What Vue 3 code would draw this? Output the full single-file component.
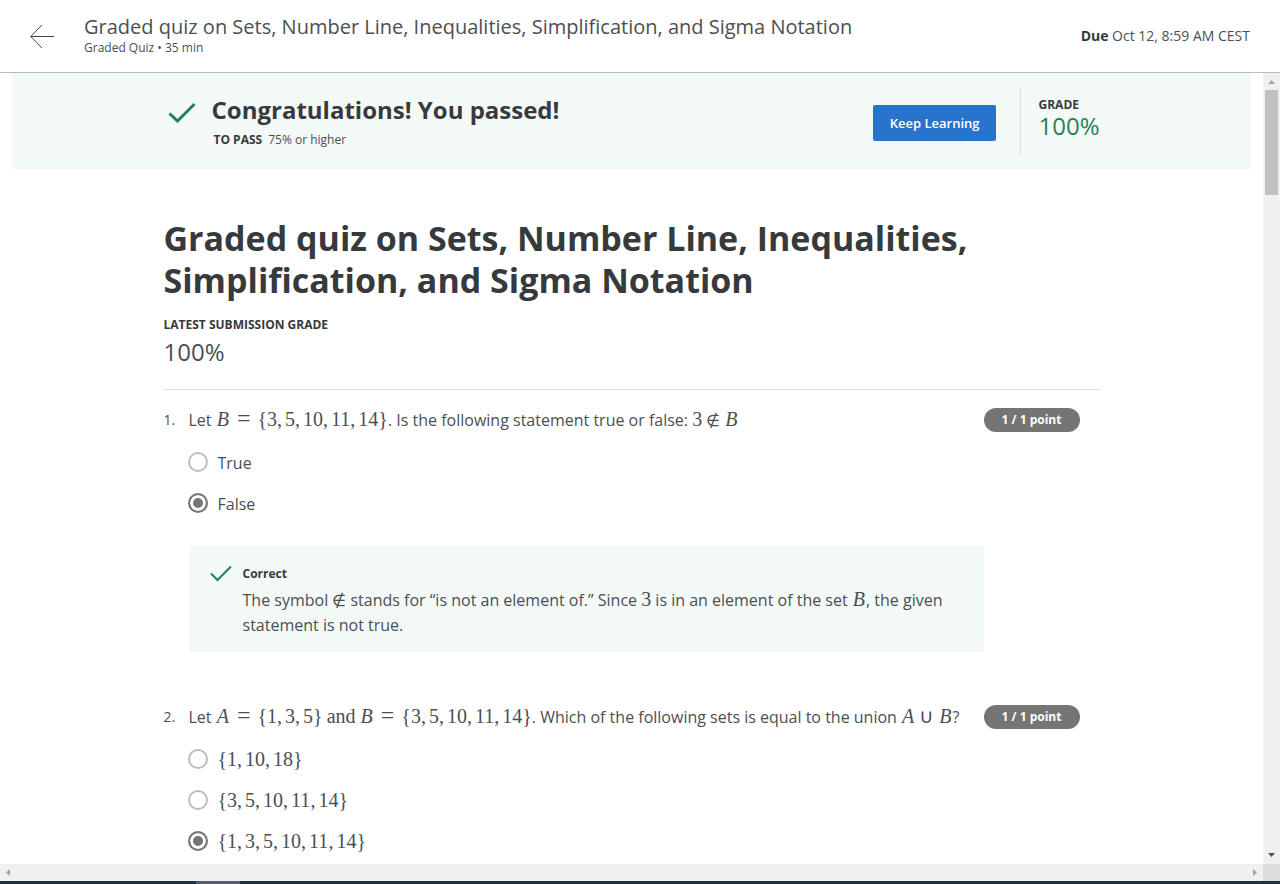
<script setup>
import { reactive } from 'vue'

const text = (value) => ({ kind: 'text', value })
const v = (value) => ({ kind: 'variable', value })
const n = (value) => ({ kind: 'digits', value })
const rel = (value) => ({ kind: 'relation', value })

// {a, b, c} as math tokens: each comma carries a thin space after it
const set = (...items) => [
  n('{' + items[0]),
  ...items.slice(1).flatMap((item) => [{ kind: 'comma', value: ',' }, n(String(item))]),
  n('}'),
]

const questions = reactive([
  {
    id: 1,
    prompt: [
      text('Let '), v('B'), rel('='), ...set(3, 5, 10, 11, 14),
      text('. Is the following statement true or false: '),
      n('3'), { kind: 'member spaced', value: '∉' }, v('B'),
    ],
    options: [[text('True')], [text('False')]],
    answer: 1,
    feedback: [
      text('The symbol '), { kind: 'member', value: '∉' },
      text(' stands for “is not an element of.” Since '), n('3'),
      text(' is in an element of the set '), v('B'),
      text(', the given '), text('statement is not true.'),
    ],
  },
  {
    id: 2,
    prompt: [
      text('Let '), v('A'), rel('='), ...set(1, 3, 5), { kind: 'word', value: 'and' },
      v('B'), rel('='), ...set(3, 5, 10, 11, 14),
      text('. Which of the following sets is equal to the union '),
      v('A'), { kind: 'union', value: '∪' }, v('B'), text('?'),
    ],
    options: [set(1, 10, 18), set(3, 5, 10, 11, 14), set(1, 3, 5, 10, 11, 14)],
    answer: 2,
    feedback: null,
  },
])
</script>

<template>
  <div class="page">
    <header class="topbar">
      <a href="#" class="back" aria-label="Back">
        <svg width="24" height="24" viewBox="0 0 24 24" fill="none" stroke="#3c4852" stroke-width="1">
          <path d="M12 1 L0.8 12.5 L12 24 M0.8 12.5 H24" />
        </svg>
      </a>
      <div class="heading">
        <div class="title">Graded quiz on Sets, Number Line, Inequalities, Simplification, and Sigma Notation</div>
        <div class="subtitle">Graded Quiz • 35 min</div>
      </div>
      <div class="due"><b>Due</b> Oct 12, 8:59 AM CEST</div>
    </header>

    <div class="workspace">
      <main class="content">
        <section class="banner">
          <div class="banner-inner">
            <svg class="check" width="28" height="22" viewBox="0 0 28 22" fill="none" stroke="#1f8354" stroke-width="3">
              <path d="M1.5 11.5 L9.5 19 L26.5 2" />
            </svg>
            <div class="result">
              <h2>Congratulations! You passed!</h2>
              <p><b>TO PASS</b><span>75% or higher</span></p>
            </div>
            <button type="button" class="keep">Keep Learning</button>
            <div class="grade">
              <div class="label">GRADE</div>
              <div class="score">100%</div>
            </div>
          </div>
        </section>

        <article class="quiz">
          <h1>Graded quiz on Sets, Number Line, Inequalities, Simplification, and Sigma Notation</h1>
          <div class="label">LATEST SUBMISSION GRADE</div>
          <div class="score">100%</div>
          <hr />

          <section v-for="q in questions" :key="q.id" class="question">
            <div class="number">{{ q.id }}.</div>
            <div class="body">
              <div class="prompt"><span v-for="(t, i) in q.prompt" :key="i" :class="t.kind">{{ t.value }}</span></div>
              <div class="options">
                <label v-for="(option, o) in q.options" :key="o" class="option">
                  <input v-model="q.answer" type="radio" :name="'question-' + q.id" :value="o" />
                  <span class="choice"><span v-for="(t, i) in option" :key="i" :class="t.kind">{{ t.value }}</span></span>
                </label>
              </div>
              <div v-if="q.feedback" class="feedback">
                <svg class="check" width="22" height="17" viewBox="0 0 22 17" fill="none" stroke="#1f8354" stroke-width="2">
                  <path d="M1 8.5 L7.5 15 L21 1.5" />
                </svg>
                <div>
                  <div class="verdict">Correct</div>
                  <div class="reason"><span v-for="(t, i) in q.feedback" :key="i" :class="t.kind">{{ t.value }}</span></div>
                </div>
              </div>
            </div>
            <div class="points">1 / 1 point</div>
          </section>
        </article>
      </main>

      <div class="vbar">
        <svg width="7" height="4" viewBox="0 0 7 4" fill="#a3a3a3"><path d="M0 4 L3.5 0 L7 4z" /></svg>
        <div class="thumb"></div>
        <svg class="end" width="7" height="4" viewBox="0 0 7 4" fill="#505050"><path d="M0 0 H7 L3.5 4z" /></svg>
      </div>
      <div class="hbar">
        <svg width="4" height="7" viewBox="0 0 4 7" fill="#a3a3a3"><path d="M4 0 L0 3.5 L4 7z" /></svg>
        <svg width="4" height="7" viewBox="0 0 4 7" fill="#a3a3a3"><path d="M0 0 L4 3.5 L0 7z" /></svg>
      </div>
      <div class="corner"></div>
    </div>
    <div class="taskbar"><div class="task"></div></div>
  </div>
</template>

<style>
body {
  margin: 0;
  overflow: hidden;
}
</style>

<style scoped>
* {
  box-sizing: border-box;
}
.page {
  display: flex;
  flex-direction: column;
  height: 100vh;
  background: #fff;
  color: #4b4f51;
  font-family: "Open Sans", sans-serif;
  font-size: 16px;
}
h1, h2, p {
  margin: 0;
}
h1, h2, b, .label, .verdict {
  color: #373a3c;
  font-weight: 700;
}
.topbar {
  display: flex;
  align-items: center;
  flex: none;
  height: 73px;
  padding: 0 30px 1px;
  border-bottom: 1px solid #b7bdbd;
}
.back {
  display: flex;
  margin-right: 30px;
}
.heading {
  flex: 1;
  padding-top: 2px;
}
.title {
  font-size: 20px;
  line-height: 22px;
}
.subtitle {
  font-size: 12px;
  line-height: 20px;
}
.due {
  font-size: 14px;
}
.workspace {
  flex: 1;
  min-height: 0;
  display: grid;
  grid-template-columns: minmax(0, 1fr) 17px;
  grid-template-rows: minmax(0, 1fr) 17px;
}
.content {
  overflow: hidden;
  padding: 0 12px;
}
.banner {
  padding: 14px 0;
  background: #f3f9f7;
}
.banner-inner {
  display: flex;
  align-items: center;
  max-width: 936px;
  height: 68px;
  margin: 0 auto;
}
.banner .check {
  margin: 0 16px 16px 4px;
}
.result {
  flex: 1;
  padding-top: 3px;
}
h2 {
  font-size: 24px;
  line-height: 34px;
}
.result p {
  display: flex;
  gap: 6px;
  padding-left: 2px;
  font-size: 12px;
  line-height: 26px;
}
.keep {
  height: 36px;
  margin-top: 4px;
  padding: 0 17px;
  border: 0;
  border-radius: 2px;
  background: #2a73cc;
  color: #fff;
  font: 600 13px "Open Sans", sans-serif;
}
.grade {
  height: 68px;
  margin-left: 24px;
  padding: 9px 0 0 17px;
  border-left: 1px solid #dcdfdf;
}
.label {
  font-size: 12px;
  line-height: 18px;
}
.score {
  font-size: 24px;
}
.grade .score {
  line-height: 24px;
  color: #1f8354;
}
.quiz {
  max-width: 936px;
  margin: 0 auto;
  padding-top: 48px;
}
h1 {
  margin-bottom: 15px;
  font-size: 34px;
  line-height: 42px;
}
.quiz > .score {
  margin-top: 2px;
  line-height: 32px;
}
hr {
  height: 1px;
  margin: 21px 0 18px;
  border: 0;
  background: #dcdfdf;
}
.question {
  display: grid;
  grid-template-columns: 25px minmax(0, 1fr) 96px;
  align-items: start;
  padding-right: 20px;
  margin-bottom: 53px;
}
.number {
  font-size: 14px;
  line-height: 24px;
}
.prompt {
  line-height: 24px;
  white-space: pre-wrap;
}
.options {
  padding-top: 10px;
}
.option {
  display: flex;
  align-items: center;
  gap: 10px;
  height: 41px;
}
input {
  appearance: none;
  flex: none;
  width: 20px;
  height: 20px;
  margin: 0 0 2px -1px;
  border: 2px solid #bdbdbd;
  border-radius: 50%;
  background: #fff;
}
input:checked {
  border-color: #757575;
  background: #757575;
  box-shadow: inset 0 0 0 3px #fff;
}
.feedback {
  display: flex;
  gap: 11px;
  margin-top: 22px;
  padding: 18px 32px 14px 21px;
  background: #f3f9f7;
}
.feedback .check {
  flex: none;
  margin-top: 1px;
}
.verdict {
  margin-bottom: 4px;
  font-size: 12px;
  line-height: 20px;
}
.reason {
  line-height: 25px;
  white-space: pre-wrap;
}
.points {
  height: 24px;
  border-radius: 12px;
  background: #757575;
  color: #fff;
  font-size: 12px;
  line-height: 24px;
  font-weight: 700;
  text-align: center;
}
.variable, .digits, .comma, .relation, .word {
  font-family: "Liberation Serif", serif;
  font-size: 20px;
  line-height: 20px;
}
.variable {
  margin: 0 1px;
  font-style: italic;
}
.comma {
  margin-right: 3px;
}
.relation {
  margin: 0 7px;
  font-size: 24px;
}
.member, .union {
  font-family: "DejaVu Sans Light", "DejaVu Sans", sans-serif;
  font-size: 16px;
  font-weight: 200;
  line-height: 20px;
}
.union {
  font-size: 20px;
}
.spaced, .union {
  margin: 0 4px;
}
.word {
  margin: 0 4px;
}
.vbar {
  display: flex;
  flex-direction: column;
  align-items: center;
  padding: 7px 0;
  background: #f0f0f0;
}
.thumb {
  width: 13px;
  height: 105px;
  margin-top: 6px;
  background: #c1c1c1;
}
.end {
  margin-top: auto;
}
.hbar {
  display: flex;
  align-items: center;
  justify-content: space-between;
  padding: 0 6px;
  background: #f0f0f0;
}
.corner {
  background: #dcdcdc;
}
.taskbar {
  flex: none;
  height: 3px;
  padding-left: 196px;
  background: #243042;
}
.task {
  width: 44px;
  height: 3px;
  background: #565d69;
}
</style>
